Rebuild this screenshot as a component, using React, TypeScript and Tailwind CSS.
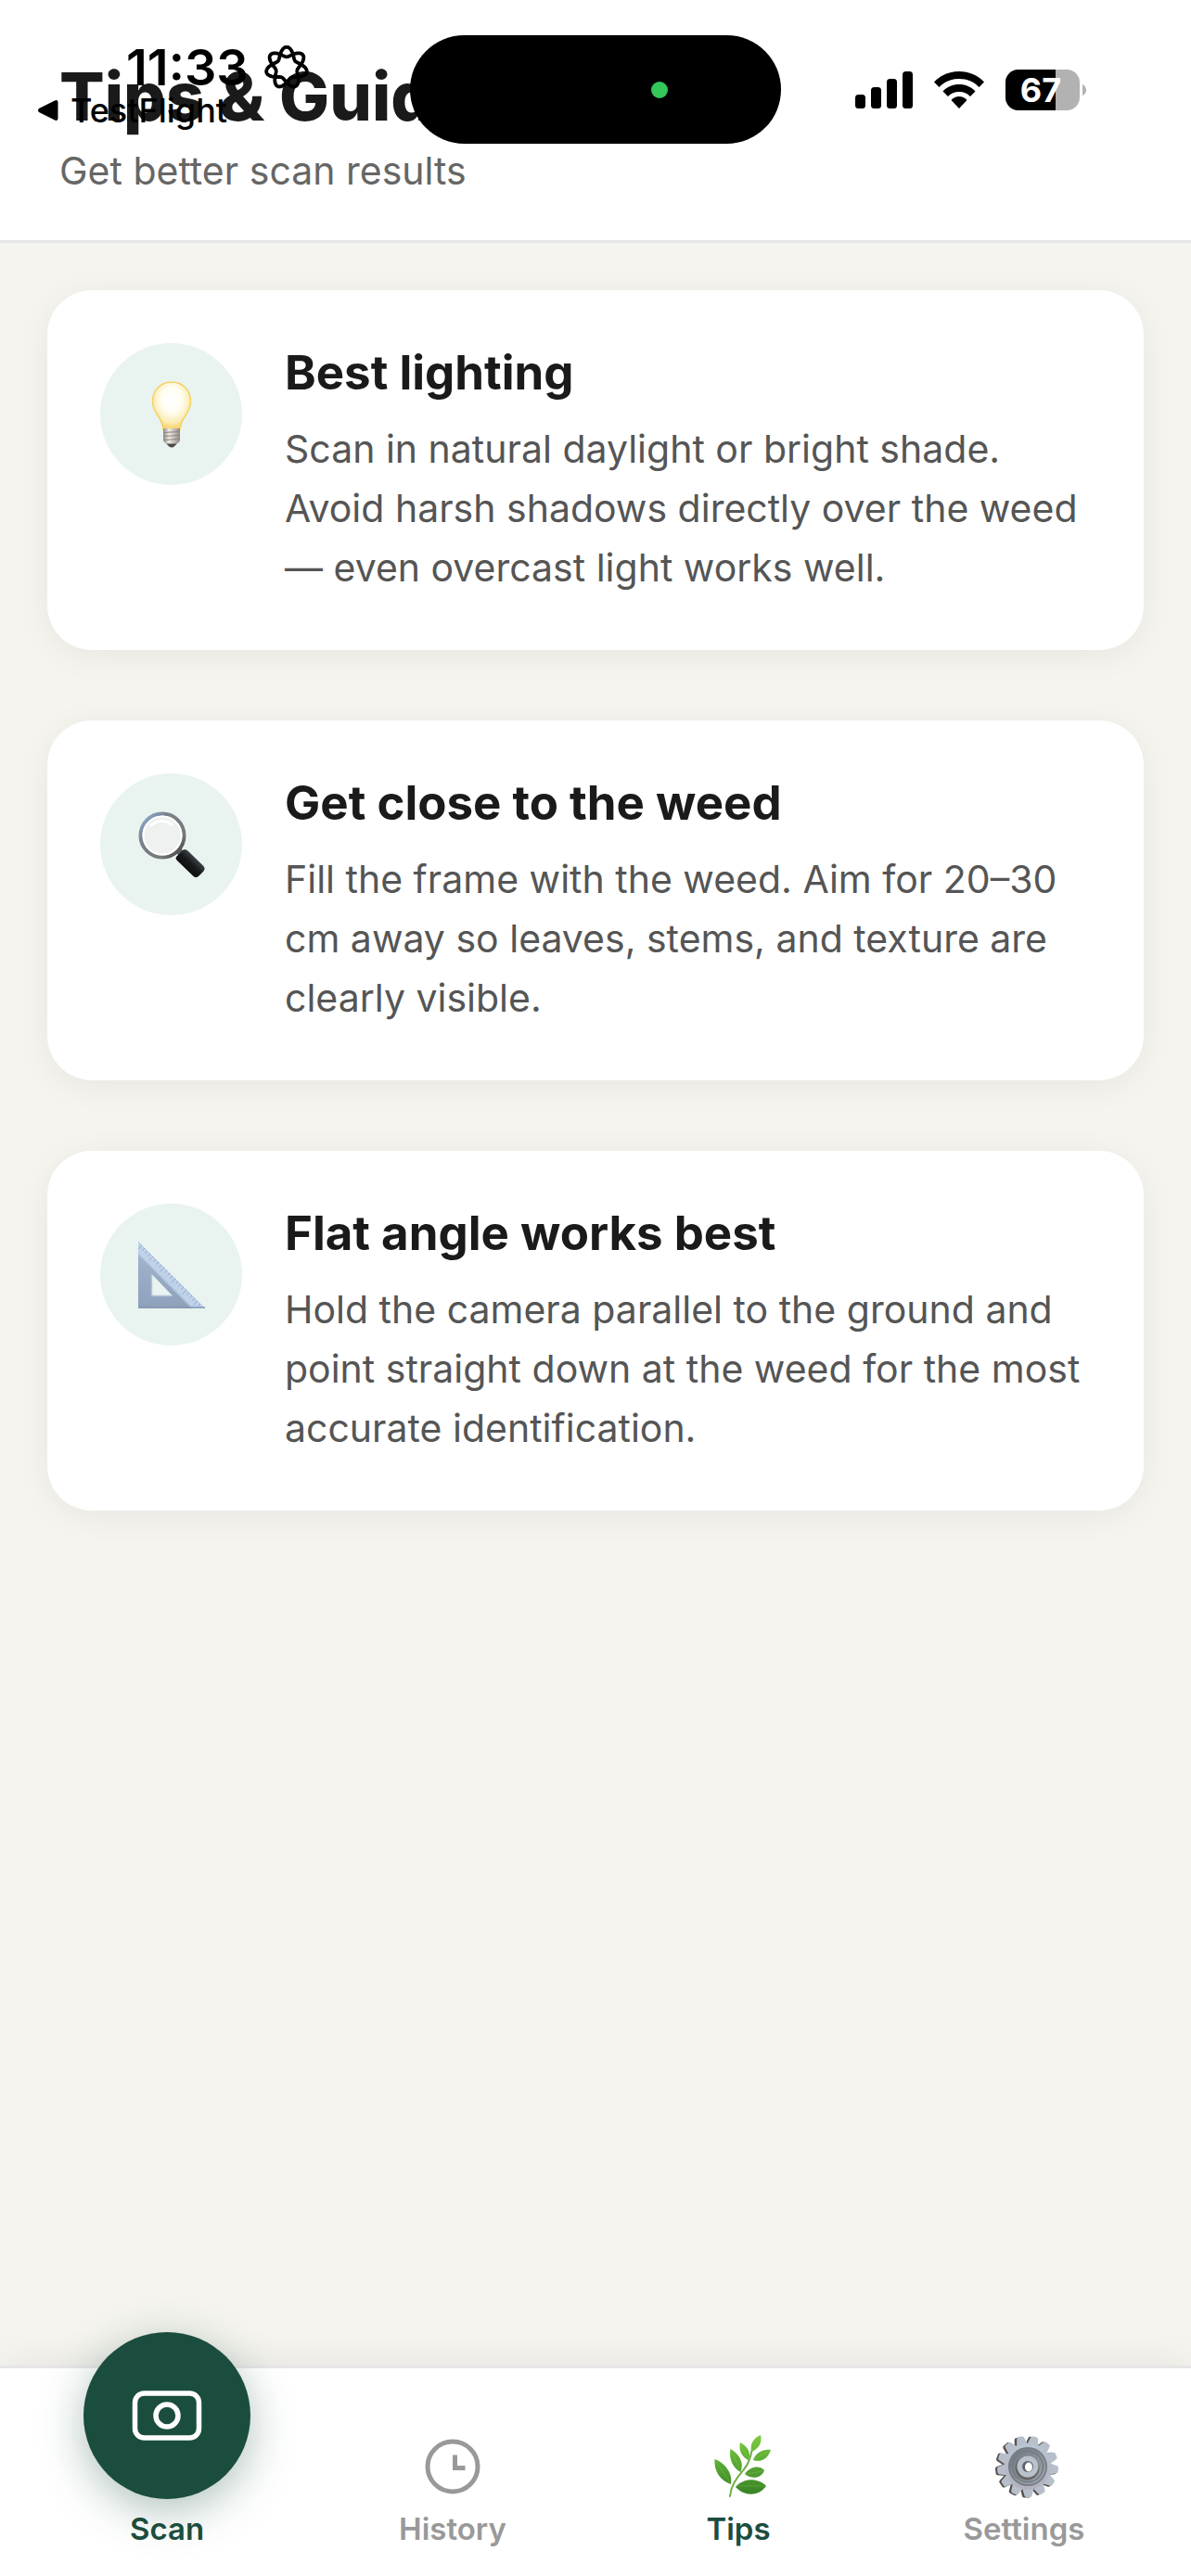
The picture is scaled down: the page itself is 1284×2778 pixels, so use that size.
import type { ReactNode } from 'react';

interface TipCardProps {
  title: string;
  description: string;
  icon: ReactNode;
}

interface NavItemProps {
  label: string;
  active?: boolean;
  children: ReactNode;
}

function BulbIcon() {
  return (
    <svg className="w-18 h-18" viewBox="0 0 72 72" aria-hidden="true">
      <defs>
        <radialGradient id="bulb-glass" cx="50%" cy="38%" r="60%">
          <stop offset="0" stopColor="#ffffff" />
          <stop offset="0.45" stopColor="#fffdf2" />
          <stop offset="0.8" stopColor="#fbecb4" />
          <stop offset="1" stopColor="#f5d56f" />
        </radialGradient>
        <linearGradient id="bulb-base" x1="0" x2="1" y1="0" y2="0">
          <stop offset="0" stopColor="#8f8a84" />
          <stop offset="0.35" stopColor="#f0ece6" />
          <stop offset="1" stopColor="#8d8780" />
        </linearGradient>
      </defs>
      <path
        d="M36 1C24 1 15.500 10 15.500 22c0 7 3 11.500 6.500 16.500 3 4.500 4.500 8.500 5 13.500h18c.5-5 2-9 5-13.500 3.500-5 6.500-9.500 6.500-16.500C56.500 10 48 1 36 1z"
        fill="url(#bulb-glass)"
        stroke="#f6d160"
        strokeWidth="1.500"
      />
      <path d="M27 51h18v12c0 2-1 3-2.500 4L39 70.500c-1.500 1.300-4.500 1.300-6 0L29.500 67C28 66 27 65 27 63z" fill="url(#bulb-base)" />
      <path d="M27 55.500l18-1M27 59.500l18-1M27.500 63.500l17-1" stroke="#8b857e" strokeWidth="1" />
      <path d="M30.500 67.500h11L38.500 70.800c-1.300 1-3.700 1-5 0z" fill="#4d4a47" />
    </svg>
  );
}

function MagnifierIcon() {
  return (
    <svg className="w-18 h-18" viewBox="0 0 72 72" aria-hidden="true">
      <defs>
        <linearGradient id="lens-rim" x1="0" x2="1" y1="0" y2="1">
          <stop offset="0" stopColor="#8fb8ea" />
          <stop offset="0.3" stopColor="#7b828b" />
          <stop offset="0.75" stopColor="#77777a" />
          <stop offset="1" stopColor="#2e3033" />
        </linearGradient>
        <linearGradient id="lens-handle" x1="0" x2="1" y1="1" y2="0">
          <stop offset="0" stopColor="#000000" />
          <stop offset="0.5" stopColor="#16181b" />
          <stop offset="0.75" stopColor="#4b5058" />
          <stop offset="1" stopColor="#101214" />
        </linearGradient>
      </defs>
      <path d="M41 45l4 4 5-5-4-4z" fill="#5c5f63" />
      <circle cx="26" cy="26" r="23.500" fill="#eff0f0" stroke="url(#lens-rim)" strokeWidth="4" />
      <circle cx="26" cy="26" r="20.500" fill="none" stroke="#ffffff" strokeWidth="2" />
      <path d="M14 15a17 17 0 0 1 22-1" fill="none" stroke="#ffffff" strokeWidth="3" strokeLinecap="round" />
      <path d="M41.500 48.500l7-7q2.500-1.500 5 1L70 58.500q3 3 .5 6L65 70q-3 2.500-6-.5L42 53q-2.500-2.500-.5-4.500z" fill="url(#lens-handle)" />
    </svg>
  );
}

function SetSquareIcon() {
  const ticks = Array.from({ length: 22 }, (_, i) => 4 + i * 3);
  return (
    <svg className="w-18 h-18" viewBox="0 0 72 72" aria-hidden="true">
      <defs>
        <linearGradient id="square-body" x1="0" x2="0" y1="0" y2="1">
          <stop offset="0" stopColor="#a6b7cf" />
          <stop offset="1" stopColor="#8ea1bb" />
        </linearGradient>
      </defs>
      <path d="M0 0L72 72H0zM14.500 35v23.500H37z" fill="url(#square-body)" fillRule="evenodd" />
      <path d="M0 0L72 72H59L0 13z" fill="#bfd2ea" />
      <path d="M0 13.500L58.500 72" stroke="#acc0da" strokeWidth="1.500" />
      <path d="M14.500 35v23.500H37" fill="none" stroke="#b4c4d8" strokeWidth="1.500" />
      <path d="M0 71h72" stroke="#8397b2" strokeWidth="1.500" />
      {ticks.map((t, i) => (
        <path
          key={t}
          d={i % 4 === 0 ? `M${t} ${t}l-4.500 4.500` : `M${t} ${t}l-2.500 2.500`}
          stroke="#8da3c2"
          strokeWidth="0.900"
        />
      ))}
    </svg>
  );
}

function CameraIcon() {
  return (
    <svg className="w-[76px] h-[56px]" viewBox="0 0 76 56" fill="none" stroke="#fff" aria-hidden="true">
      <rect x="3.500" y="4" width="69" height="48" rx="10" strokeWidth="5.500" />
      <circle cx="38" cy="28" r="12" strokeWidth="5.500" />
    </svg>
  );
}

function ClockIcon() {
  return (
    <svg className="w-15 h-15" viewBox="0 0 60 60" fill="none" stroke="#999" aria-hidden="true">
      <circle cx="30" cy="30" r="27" strokeWidth="5" />
      <path d="M32.500 17.500V31.500H43.500" strokeWidth="5" />
    </svg>
  );
}

function LeafIcon() {
  return (
    <svg className="w-[74px] h-[70px]" viewBox="-8 0 74 70" aria-hidden="true">
      <defs>
        <linearGradient id="leaf" x1="0" x2="0" y1="1" y2="67" gradientUnits="userSpaceOnUse">
          <stop offset="0" stopColor="#7ccb3c" />
          <stop offset="0.45" stopColor="#5aaa34" />
          <stop offset="1" stopColor="#377f24" />
        </linearGradient>
      </defs>
      <path d="M20 67c1-13 9-21 15-29 5-6 7-12 8.500-20" fill="none" stroke="#6fae45" strokeWidth="2" strokeLinecap="round" />
      <g fill="url(#leaf)">
        <path d="M53 1c-7 3-12 9-10 18 8-3 12-10 10-18z" />
        <path d="M31 9c-2 9 2 16 9 19 3-8-1-15-9-19z" />
        <path d="M64 17c-9-1-16 3-19 11 9 3 16-2 19-11z" />
        <path d="M20.500 16c-2 10 2 20 11 25 4-11-2-20-11-25z" />
        <path d="M57 39c-5-6-16-4-21 4 7 6 18 5 21-4z" />
        <path d="M3.500 27c-1 13 6 23 17.500 27C23 41 14 31 3.500 27z" />
        <path d="M59 56c-9-9-24-9-33 1 9 10 24 11 33-1z" />
      </g>
      <g fill="none" stroke="#8fd45a" strokeWidth="0.800" opacity="0.400">
        <path d="M52 3L43.500 18M32 12l7.500 15M62 18L46 27M22 19l9 20M55 40l-18 3M5 30l15 22M57 56H28" />
      </g>
    </svg>
  );
}

function GearIcon() {
  const teeth = Array.from({ length: 13 }, (_, i) => (i * 360) / 13 + 13);
  return (
    <svg className="w-[76px] h-[70px]" viewBox="-6 0 76 70" aria-hidden="true">
      <defs>
        <linearGradient id="gear-face" x1="0" x2="0" y1="0" y2="1">
          <stop offset="0" stopColor="#b9c6d3" />
          <stop offset="1" stopColor="#b4b0bd" />
        </linearGradient>
        <linearGradient id="gear-dish" x1="0" x2="1" y1="0" y2="1">
          <stop offset="0" stopColor="#70777f" />
          <stop offset="1" stopColor="#a0a7ae" />
        </linearGradient>
      </defs>
      {/* darker copy behind the face gives the gear its thickness */}
      <g fill="#56514f">
        {teeth.map((a) => (
          <path key={a} d="M27.500 13L29.500 4Q30 2.500 31.500 2.500h5Q38 2.500 38.500 4L40.500 13z" transform={`rotate(${a} 34 35.500)`} />
        ))}
        <circle cx="34" cy="35.500" r="25" />
      </g>
      <g fill="#b7bfca">
        {teeth.map((a) => (
          <path key={a} d="M29.500 13L32 3.500Q32.500 2 34 2h4Q39.500 2 40 3.500L42.500 13z" transform={`rotate(${a} 36 35)`} />
        ))}
      </g>
      <circle cx="36" cy="35" r="25" fill="url(#gear-face)" />
      <circle cx="36" cy="35" r="21" fill="#727980" />
      <circle cx="36" cy="35" r="19.500" fill="url(#gear-dish)" />
      <circle cx="36" cy="35" r="16.500" fill="none" stroke="#747b83" strokeWidth="1.500" />
      <circle cx="35.500" cy="36.500" r="13" fill="#686566" />
      <circle cx="36" cy="35" r="11.500" fill="#b9c1cb" />
      <circle cx="36" cy="35" r="6" fill="#5d6268" />
      <ellipse cx="37" cy="35.500" rx="4" ry="5" fill="#fff" />
    </svg>
  );
}

// One closed curve that goes round twice and crosses itself into seven loops.
function KnotIcon() {
  const points = Array.from({ length: 241 }, (_, i) => {
    const t = (i / 240) * Math.PI * 4;
    const radius = 17 + 5.3 * Math.cos(3.5 * t);
    const angle = t - 0.06 * Math.sin(3.5 * t) - Math.PI / 2;
    return `${(25 + radius * Math.cos(angle)).toFixed(2)},${(25 + radius * Math.sin(angle)).toFixed(2)}`;
  });
  return (
    <svg className="w-[50px] h-[50px]" viewBox="0 0 50 50" aria-hidden="true">
      <polyline points={points.join(' ')} fill="none" stroke="#000" strokeWidth="3.800" strokeLinejoin="round" />
    </svg>
  );
}

function SignalIcon() {
  return (
    <svg className="w-[62px] h-10" viewBox="0 0 62 40" aria-hidden="true">
      <rect x="0" y="25" width="11" height="15" rx="3.500" />
      <rect x="17" y="17" width="11" height="23" rx="3.500" />
      <rect x="34" y="8" width="11" height="32" rx="3.500" />
      <rect x="51" y="0" width="11" height="40" rx="3.500" />
    </svg>
  );
}

function WifiIcon() {
  return (
    <svg className="w-[54px] h-10" viewBox="0 0 54 40" aria-hidden="true">
      <path d="M0 11.500C7 4 16.500 0 27 0s20 4 27 11.500L48.500 17C43 11 35.500 8 27 8S11 11 5.500 17z" />
      <path d="M9.500 21.500C14 16.500 20 14 27 14s13 2.500 17.500 7.500L39 27c-3.200-3.300-7.300-5-12-5s-8.800 1.700-12 5z" />
      <path d="M18.500 31c2.300-2.600 5.200-4 8.500-4s6.200 1.400 8.500 4L27 40z" />
    </svg>
  );
}

function Battery({ level }: { level: number }) {
  return (
    <div className="flex items-center gap-[3px]">
      <div className="relative w-20 h-11 rounded-[14px] overflow-hidden bg-[#b2b2b2]">
        <div className="h-full bg-black" style={{ width: `${level}%` }} />
        <span className="absolute inset-0 flex items-center justify-center pr-1 text-white text-4xl font-bold">
          {level}
        </span>
      </div>
      <svg className="w-1 h-3" viewBox="0 0 4 12" aria-hidden="true">
        <path d="M0 0q4 2 4 6t-4 6z" fill="#b2b2b2" />
      </svg>
    </div>
  );
}

function StatusBar() {
  return (
    <div className="absolute inset-x-0 top-0 z-10 flex justify-between text-black">
      <div className="flex flex-col items-start pt-[41px] pl-10">
        <div className="flex items-center gap-4 pl-24">
          <span className="text-[54px] leading-[64px] font-semibold">11:33</span>
          <KnotIcon />
        </div>
        <a href="#testflight" className="flex items-center gap-3 text-4xl leading-7 font-medium">
          <svg className="w-6 h-6" viewBox="0 0 24 24" aria-hidden="true">
            <path d="M2 10Q0 12 2 14l17 8.500q3.500 1.500 3.500-2V3.500q0-3.500-3.500-2z" />
          </svg>
          TestFlight
        </a>
      </div>
      <div className="absolute left-1/2 top-[38px] -translate-x-1/2 w-[400px] h-[117px] rounded-full bg-black">
        <span className="absolute left-[260px] top-[50px] w-[18px] h-[18px] rounded-full bg-[#34c759]" />
      </div>
      <div className="flex items-center gap-[23px] h-[194px] pr-[113px]">
        <SignalIcon />
        <WifiIcon />
        <Battery level={67} />
      </div>
    </div>
  );
}

function TipCard({ title, description, icon }: TipCardProps) {
  return (
    <article className="flex items-start gap-[46px] bg-white rounded-[48px] p-[57px] shadow-[0_6px_36px_rgba(0,0,0,0.06)]">
      <div className="shrink-0 flex items-center justify-center w-[153px] h-[153px] rounded-full bg-[#e9f4f0]">
        {icon}
      </div>
      <div className="flex-1">
        <h2 className="text-[51px] leading-[64px] font-bold text-[#1a1a1a]">{title}</h2>
        <p className="mt-[18px] text-[41px] leading-[64px] text-[#555]">{description}</p>
      </div>
    </article>
  );
}

function NavItem({ label, active, children }: NavItemProps) {
  return (
    <button
      type="button"
      className={`flex-1 flex flex-col items-center gap-3 text-[33px] leading-10 font-semibold ${
        active ? 'text-[#1b4d3e]' : 'text-[#999]'
      }`}
    >
      <span className="flex items-center justify-center h-[70px]">{children}</span>
      {label}
    </button>
  );
}

const tips: TipCardProps[] = [
  {
    title: 'Best lighting',
    description:
      'Scan in natural daylight or bright shade. Avoid harsh shadows directly over the weed — even overcast light works well.',
    icon: <BulbIcon />
  },
  {
    title: 'Get close to the weed',
    description:
      'Fill the frame with the weed. Aim for 20–30 cm away so leaves, stems, and texture are clearly visible.',
    icon: <MagnifierIcon />
  },
  {
    title: 'Flat angle works best',
    description:
      'Hold the camera parallel to the ground and point straight down at the weed for the most accurate identification.',
    icon: <SetSquareIcon />
  }
];

export default function App() {
  return (
    <div className="relative min-h-screen flex flex-col bg-[#f5f4ef] font-['Inter',sans-serif]">
      <StatusBar />
      <header className="bg-white border-b-3 border-[#e6e6e6] px-16 pt-[60px] pb-[43px]">
        <h1 className="text-7xl leading-[88px] font-extrabold text-[#1a1a1a]">Tips &amp; Guide</h1>
        <p className="mt-1 text-[41px] leading-[64px] text-[#666]">Get better scan results</p>
      </header>

      <main className="flex-1 flex flex-col gap-19 px-[51px] pt-[51px] pb-16">
        {tips.map((tip) => (
          <TipCard key={tip.title} {...tip} />
        ))}
      </main>

      <nav className="flex items-end bg-white border-t-3 border-[#e6e6e6] px-[26px] pt-[71px] pb-[31px] shadow-[0_-6px_36px_rgba(0,0,0,0.06)]">
        <NavItem label="Scan" active>
          <span className="self-end shrink-0 flex items-center justify-center w-45 h-45 rounded-full bg-[#1b4d3e] shadow-[0_12px_48px_rgba(27,77,62,0.35)]">
            <CameraIcon />
          </span>
        </NavItem>
        <NavItem label="History">
          <ClockIcon />
        </NavItem>
        <NavItem label="Tips" active>
          <LeafIcon />
        </NavItem>
        <NavItem label="Settings">
          <GearIcon />
        </NavItem>
      </nav>
    </div>
  );
}
